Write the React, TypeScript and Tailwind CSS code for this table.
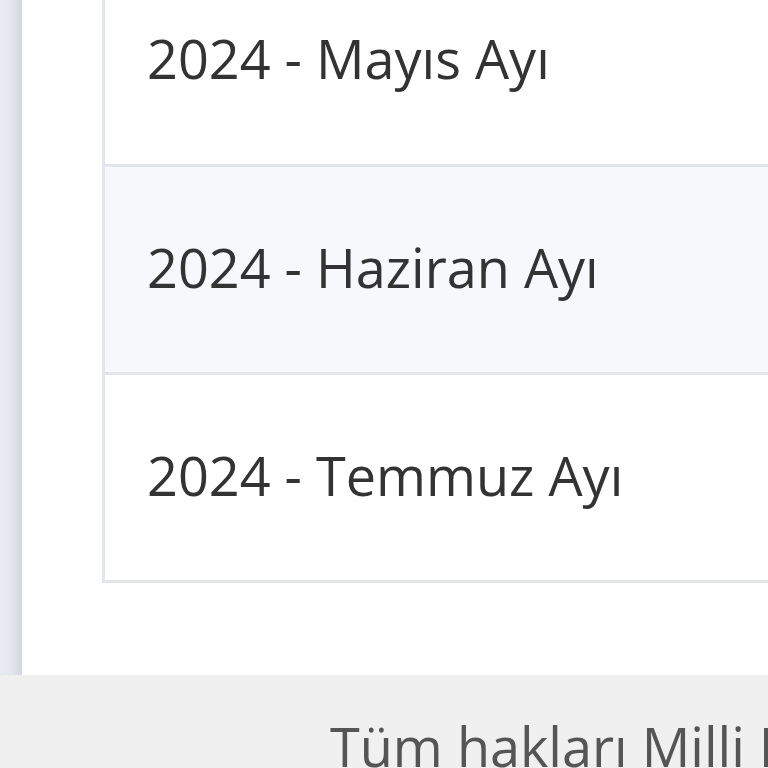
export default function App() {
  const rows = ["2024 - Mayıs Ayı", "2024 - Haziran Ayı", "2024 - Temmuz Ayı"];
  return (
    <div className="w-[768px] h-[768px] overflow-hidden flex flex-col bg-[#f0f0f0] font-['Open_Sans',sans-serif]">
      <div className="h-[675px] flex shrink-0">
        <div className="w-[22px] shrink-0 bg-gradient-to-r from-[#e8ebf3] via-[#e4e7ee] to-[#d3d6dc]" />
        <div className="flex-1 bg-white pl-[80px] overflow-hidden">
          <div className="-mt-[44px] border-l-[3px] border-b-[3px] border-[#e2e5ea]">
            {rows.map((r, i) => (
              <div
                key={r}
                className={
                  "h-[208px] flex items-center pl-[42px] pb-[4px] text-[54px] text-[#333] whitespace-nowrap " +
                  (i > 0 ? "border-t-[3px] border-[#e2e5ea] " : "") +
                  (i === 1 ? "bg-[#f7f8fc]" : "bg-white")
                }
              >
                {r}
              </div>
            ))}
          </div>
        </div>
      </div>
      <div className="pl-[330px] pt-[44px] text-[54px] leading-none text-[#555] whitespace-nowrap">
        Tüm hakları Milli Eğitim Bakanlığı'na aittir.
      </div>
    </div>
  );
}
